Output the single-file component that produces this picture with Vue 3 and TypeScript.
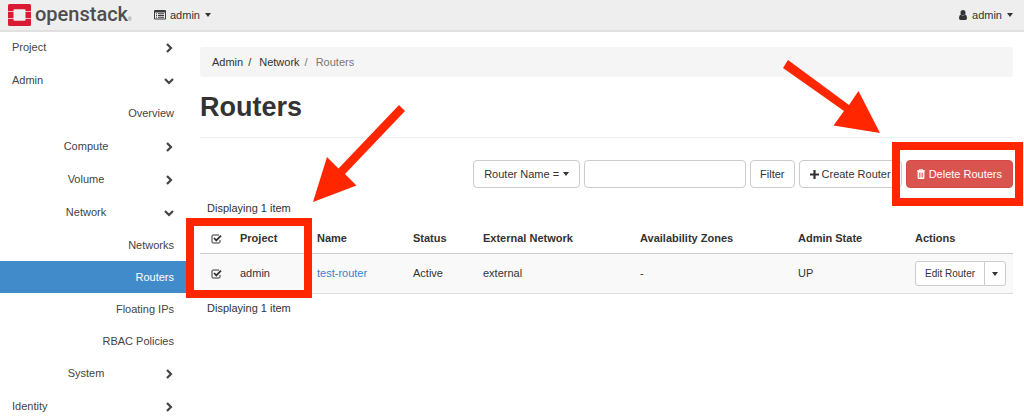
<script setup lang="ts">
import { ref } from 'vue'

interface NavItem {
  label: string
  kind: 'top' | 'group' | 'leaf'
  open?: boolean
  active?: boolean
}

const nav: NavItem[] = [
  { label: 'Project', kind: 'top' },
  { label: 'Admin', kind: 'top', open: true },
  { label: 'Overview', kind: 'leaf' },
  { label: 'Compute', kind: 'group' },
  { label: 'Volume', kind: 'group' },
  { label: 'Network', kind: 'group', open: true },
  { label: 'Networks', kind: 'leaf' },
  { label: 'Routers', kind: 'leaf', active: true },
  { label: 'Floating IPs', kind: 'leaf' },
  { label: 'RBAC Policies', kind: 'leaf' },
  { label: 'System', kind: 'group' },
  { label: 'Identity', kind: 'top' },
]

const columns: string[] = ['Project', 'Name', 'Status', 'External Network', 'Availability Zones', 'Admin State', 'Actions']
const search = ref('')
const allSelected = ref(true)
</script>

<template>
  <div class="page">
    <header class="topbar">
      <a class="brand" href="#" aria-label="openstack">
        <svg class="mark" viewBox="0 0 23 22" aria-hidden="true">
          <path fill="#da1a32" d="M1.500 0h20Q23 0 23 1.500V7h-5.500V6q0-.8-.8-.8H6.300q-.8 0-.8.8v1H0V1.500Q0 0 1.500 0zM0 7.700h5.500v6.600H0zM17.500 7.700H23v6.600h-5.500zM0 15h5.500v1q0 .8.8.8h10.400q.8 0 .8-.8v-1H23v5.500q0 1.500-1.500 1.500h-20Q0 22 0 20.500z" />
        </svg>
        <span class="wordmark">openstack</span><span class="dot">®</span>
      </a>
      <button class="menu" type="button">
        <svg class="list-icon" viewBox="0 0 12 10" aria-hidden="true">
          <path fill="#3c3c3c" fill-rule="evenodd" d="M1 0h10q1 0 1 1v7.500q0 1-1 1H1q-1 0-1-1V1q0-1 1-1zM1 2.500v6h10v-6zM2 3.200h1v1H2zM4 3.200h6v1H4zM2 5h1v1H2zM4 5h6v1H4zM2 6.800h1v1H2zM4 6.800h6v1H4z" />
        </svg>
        admin<span class="caret"></span>
      </button>
      <button class="menu user" type="button">
        <svg class="user-icon" viewBox="0 0 8 10" aria-hidden="true">
          <path fill="#333" d="M4 0a2.500 2.500 0 0 1 2.500 2.500A2.500 2.500 0 0 1 4 5.200 2.500 2.500 0 0 1 1.500 2.500 2.500 2.500 0 0 1 4 0zM1.600 4.600Q4 6.800 6.400 4.600 8 5.200 8 8.200 8 10 6.500 10h-5Q0 10 0 8.200 0 5.200 1.600 4.600z" />
        </svg>
        admin<span class="caret"></span>
      </button>
    </header>

    <div class="body">
      <nav class="sidebar">
        <a v-for="item in nav" :key="item.label" href="#" :class="['item', item.kind, { active: item.active }]">
          <span class="label">{{ item.label }}</span>
          <svg v-if="item.kind !== 'leaf'" class="chevron" viewBox="0 0 10 10" aria-hidden="true">
            <path :d="item.open ? 'M1 3l4 4 4-4' : 'M3 1l4 4-4 4'" fill="none" stroke="#444" stroke-width="2.200" />
          </svg>
        </a>
      </nav>

      <main class="content">
        <ol class="breadcrumb">
          <li><a href="#">Admin</a></li>
          <li><a href="#">Network</a></li>
          <li class="current">Routers</li>
        </ol>
        <h1>Routers</h1>

        <form class="toolbar" @submit.prevent>
          <button class="btn" type="button">Router Name =<span class="caret"></span></button>
          <input v-model="search" class="search" type="text" aria-label="Router name" />
          <button class="btn filter" type="submit">Filter</button>
          <button class="btn create" type="button">
            <svg class="plus" viewBox="0 0 9 9" aria-hidden="true"><path fill="#333" d="M3.400 0h2.200v3.400H9v2.200H5.600V9H3.400V5.600H0V3.400h3.400z" /></svg>
            Create Router
          </button>
          <button class="btn danger" type="button">
            <svg class="trash" viewBox="0 0 8 10" aria-hidden="true">
              <path fill="#fff" fill-rule="evenodd" d="M2.500 0h3l.5 1.300h2v1h-.6V9q0 1-1 1H1.600q-1 0-1-1V2.300H0v-1h2zM3 .8l-.2.500h2.400L5 .8zM1.900 3.500v5h.8v-5zM3.600 3.500v5h.8v-5zM5.300 3.500v5h.8v-5z" />
            </svg>
            Delete Routers
          </button>
        </form>

        <p class="count">Displaying 1 item</p>
        <table>
          <colgroup>
            <col class="c-check" /><col class="c-project" /><col class="c-name" /><col class="c-status" />
            <col class="c-ext" /><col class="c-zone" /><col class="c-state" /><col />
          </colgroup>
          <thead>
            <tr>
              <th scope="col"><input v-model="allSelected" type="checkbox" aria-label="Select all routers" /></th>
              <th v-for="c in columns" :key="c" scope="col">{{ c }}</th>
            </tr>
          </thead>
          <tbody>
            <tr>
              <td><input v-model="allSelected" type="checkbox" aria-label="Select test-router" /></td>
              <td>admin</td>
              <td><a href="#">test-router</a></td>
              <td>Active</td>
              <td>external</td>
              <td>-</td>
              <td>UP</td>
              <td>
                <div class="split">
                  <button type="button">Edit Router</button>
                  <button type="button" class="more" aria-label="More actions"><span class="caret"></span></button>
                </div>
              </td>
            </tr>
          </tbody>
        </table>
        <p class="count below">Displaying 1 item</p>
      </main>
    </div>

    <svg class="callout select" width="230" height="200" viewBox="180 100 230 200" aria-hidden="true">
      <rect x="190" y="222" width="118" height="72" fill="none" stroke="#ff2600" stroke-width="8" />
      <path fill="#ff2600" d="M399 105l6 6-60 63 11.500 11.500L313 202l14-45 11.500 11.500z" />
    </svg>
    <svg class="callout delete" width="244" height="150" viewBox="780 58 244 150" aria-hidden="true">
      <rect x="896" y="146" width="123" height="56" fill="none" stroke="#ff2600" stroke-width="8" />
      <path fill="#ff2600" d="M788 60l61 45 9.500-14L880 133l-46.500-7.500L844 111l-61-43z" />
    </svg>
  </div>
</template>

<style>
body {
  margin: 0;
  background: #fff;
}
</style>

<style scoped>
.page {
  position: relative;
  font: 11px/15px "Liberation Sans", Arial, sans-serif;
  color: #333;
}
* {
  box-sizing: border-box;
}
a {
  color: inherit;
  text-decoration: none;
}
button,
input {
  font: inherit;
  color: inherit;
}
.topbar {
  display: flex;
  align-items: center;
  height: 32px;
  padding: 0 11px 0 8px;
  background: #eee;
  border-bottom: 2px solid #e0e0e0;
}
.brand {
  display: flex;
  align-items: center;
  width: 146px;
}
.mark {
  width: 23px;
  height: 22px;
}
.wordmark {
  margin-left: 4px;
  font: 500 20px/22px Roboto, sans-serif;
  color: #4d4d4f;
  padding-bottom: 2px;
}
.dot {
  font-size: 5px;
  line-height: 6px;
  padding-top: 8px;
  color: #777;
}
.menu {
  display: flex;
  align-items: center;
  padding: 0;
  border: 0;
  background: none;
}
.menu.user {
  margin-left: auto;
}
.list-icon {
  width: 12px;
  height: 10px;
  margin-right: 4px;
}
.user-icon {
  width: 8px;
  height: 10px;
  margin-right: 5px;
}
.caret {
  display: inline-block;
  margin-left: 4px;
  border: 3px solid transparent;
  border-top: 4px solid #333;
  border-bottom: 0;
  vertical-align: 1px;
}
.menu .caret {
  margin-left: 5px;
}
.body {
  display: flex;
}
.sidebar {
  flex: 0 0 188px;
}
.item {
  display: flex;
  align-items: center;
  padding: 9px 14px 9px 12px;
  color: #444;
}
.item:first-child {
  padding-top: 8px;
}
.leaf {
  justify-content: flex-end;
}
.leaf + .leaf,
.group + .leaf {
  padding-bottom: 8px;
}
.item:last-child {
  padding-bottom: 0;
}
.label {
  flex: 1;
}
.leaf .label {
  text-align: right;
}
.group .label {
  padding-right: 4px;
  text-align: center;
}
.item.active {
  color: #fff;
  background: #428bca;
}
.chevron {
  width: 10px;
  height: 10px;
}
.content {
  flex: 1;
  min-width: 0;
  padding: 15px 11px 0 12px;
}
.breadcrumb {
  display: flex;
  margin: 0;
  padding: 8px 12px 7px;
  list-style: none;
  background: #f5f5f5;
  border-radius: 3px;
}
.breadcrumb li + li::before {
  content: "/";
  padding: 0 8px 0 5px;
}
.breadcrumb .current {
  color: #777;
}
h1 {
  margin: 0 0 22px;
  padding: 15px 0 14px;
  font-size: 27px;
  line-height: 31px;
  border-bottom: 1px solid #eee;
}
.toolbar {
  display: flex;
  justify-content: flex-end;
  gap: 4px;
}
.btn {
  display: flex;
  align-items: center;
  height: 28px;
  padding: 0 10px;
  background: #fff;
  border: 1px solid #ccc;
  border-radius: 4px;
  white-space: nowrap;
}
.btn.filter {
  padding: 0 9px;
}
.search {
  width: 162px;
  height: 28px;
  padding: 0 8px;
  border: 1px solid #ccc;
  border-radius: 4px;
}
.plus {
  width: 9px;
  height: 9px;
  margin-right: 3px;
}
.trash {
  width: 8px;
  height: 10px;
  margin-right: 4px;
}
.danger {
  color: #fff;
  background: #d9534f;
  border-color: #d64a46;
}
.count {
  margin: 13px 0 8px 7px;
}
.below {
  margin: 7px 0 0 7px;
}
table {
  width: 100%;
  table-layout: fixed;
  border-collapse: collapse;
}
.c-check { width: 33px; }
.c-project { width: 77px; }
.c-name { width: 96px; }
.c-status { width: 70px; }
.c-ext { width: 157px; }
.c-zone { width: 158px; }
.c-state { width: 117px; }
th,
td {
  padding: 7px 0 7px 7px;
  text-align: left;
}
thead tr {
  border-bottom: 1px solid #ccc;
}
tbody tr {
  background: #f9f9f9;
  border-bottom: 1px solid #ddd;
}
td a {
  color: #3584cb;
}
input[type="checkbox"] {
  appearance: none;
  display: block;
  width: 11px;
  height: 10px;
  margin: 0 0 0 4px;
  background: url("data:image/svg+xml,%3Csvg xmlns='http://www.w3.org/2000/svg' viewBox='0 0 11 10'%3E%3Cpath d='M8 1H2Q1 1 1 2v6q0 1 1 1h6q1 0 1-1V6' fill='none' stroke='%23333'/%3E%3Cpath d='M3 4l2.300 2.400L10 1.700' fill='none' stroke='%23333' stroke-width='1.800'/%3E%3C/svg%3E") center / 11px 10px no-repeat;
}
.split {
  display: flex;
}
.split button {
  height: 25px;
  padding: 0 9px;
  font-size: 10px;
  background: #fff;
  border: 1px solid #ccc;
  border-radius: 3px 0 0 3px;
  white-space: nowrap;
}
.split .more {
  display: flex;
  align-items: center;
  margin-left: -1px;
  padding: 0 7px;
  border-radius: 0 3px 3px 0;
}
.more .caret {
  margin: 0;
}
.callout {
  position: absolute;
  pointer-events: none;
}
.select {
  top: 100px;
  left: 180px;
}
.delete {
  top: 58px;
  right: 0;
}
</style>
